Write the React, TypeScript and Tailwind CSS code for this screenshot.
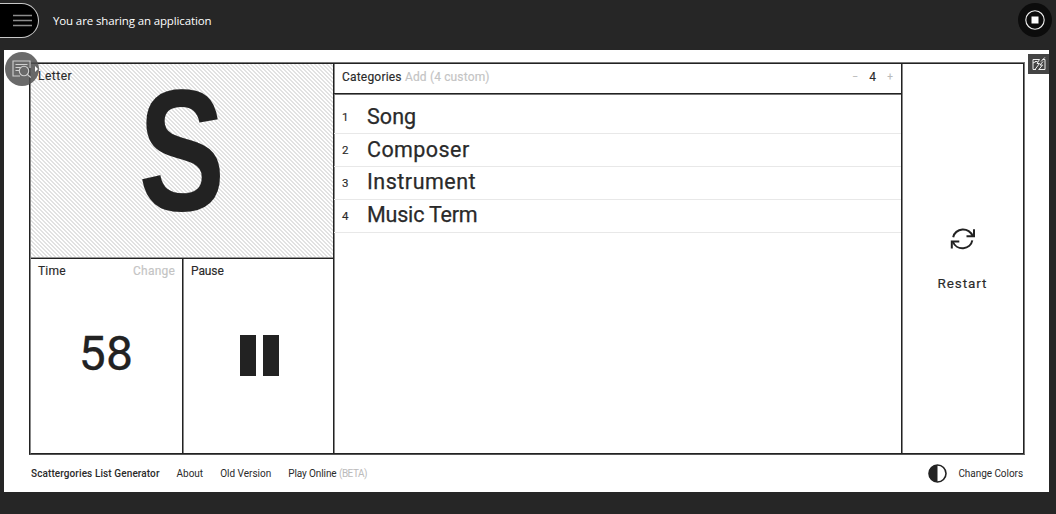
import React from "react";

const CATEGORIES = [
  { name: "Song", style: "tracking-[0.05px]" },
  { name: "Composer", style: "tracking-[0.42px]" },
  { name: "Instrument", style: "tracking-[0.5px] pb-[2px]" },
  { name: "Music Term", style: "tracking-[-0.2px] pb-[2px]" },
];

function SearchPageIcon() {
  return (
    <svg width="20" height="20" viewBox="0 0 20 20" fill="none" stroke="#d0d0d0" strokeWidth="1.1">
      <path d="M8 17H1V2h17v7" />
      <path d="M3.5 5.5h12M3.5 8.5h5M3.5 11.5h3.5" />
      <circle cx="12" cy="12" r="4.7" />
      <path d="M15.3 15.3l3.5 3.2" />
    </svg>
  );
}

function RestartIcon() {
  return (
    <svg width="26" height="24" viewBox="0 0 26 24" fill="none" stroke="#222" strokeWidth="2">
      <path d="M3.2 10.2A10 9.3 0 0 1 22.6 9" />
      <path d="M24 2.2V9.3h-7.5" />
      <path d="M22.3 13.4A10 9.3 0 0 1 3 15" />
      <path d="M1.8 21.5V14.4H9.3" />
    </svg>
  );
}

export default function App() {
  return (
    <div className="relative flex h-[514px] w-[1056px] flex-col overflow-hidden bg-[#262626] font-['Roboto',sans-serif] text-[#2a2a2a]">
      <header className="flex h-[50px] items-start justify-between">
        <div className="flex items-start">
          <button className="mt-[3px] flex h-[35px] w-[39px] items-center rounded-r-full border border-l-0 border-[#c8c8c8] bg-black pl-[13px]">
            <svg width="19" height="13" viewBox="0 0 19 13" stroke="#8c8c8c" strokeWidth="1.6">
              <path d="M0 1.5h19M0 6.5h19M0 11.5h19" />
            </svg>
          </button>
          <span className="ml-[14px] mt-[12px] whitespace-nowrap font-['Open_Sans',sans-serif] text-[11.5px] font-medium leading-[18px] tracking-[-0.13px] text-white">
            You are sharing an application
          </span>
        </div>
        <button className="mr-[4px] mt-[3px] flex size-[34px] items-center justify-center rounded-full bg-[#0c0c0c]">
          <svg width="20" height="20" viewBox="0 0 20 20">
            <circle cx="10" cy="10" r="9.2" fill="none" stroke="#eee" strokeWidth="1.1" />
            <rect x="6.5" y="6.5" width="7" height="7" fill="#fff" />
          </svg>
        </button>
      </header>

      <main className="ml-[4px] flex h-[442px] w-[1045px] flex-col bg-white pl-[25px] pt-[12px]">
        <div className="h-[393px] w-[996px] border border-b-[#555] border-l-[#222] border-r-[#777] border-t-[#777]">
          <div className="flex h-full border border-b-[#222] border-l-[#888] border-r-[#222] border-t-[#222] [-webkit-text-stroke:0.15px_currentColor]">
            <div className="flex w-[302px] flex-col">
              <section className="flex h-[194px] flex-col bg-[linear-gradient(45deg,#fff_25%,#e2e2e2_25%,#e2e2e2_50%,#fff_50%,#fff_75%,#e2e2e2_75%)] bg-[length:4px_4px] px-[7px]">
                <h2 className="mt-[3px] text-[12px] leading-[18px] tracking-[0.5px]">Letter</h2>
                <div className="flex justify-center">
                  <span className="block scale-x-[0.75] font-['Liberation_Sans',sans-serif] text-[173px] font-bold leading-[131px] text-[#222]">
                    S
                  </span>
                </div>
              </section>
              <div className="flex flex-1 border-t border-[#222] shadow-[0_-1px_0_#999]">
                <section className="flex w-[151px] flex-col px-[7px]">
                  <div className="mt-[3px] flex justify-between text-[12px] leading-[18px] tracking-[0.2px]">
                    <h2>Time</h2>
                    <button className="text-[#c4c4c4]">Change</button>
                  </div>
                  <div className="mt-[40px] pr-[1px] text-center text-[48px] leading-[68px] tracking-[0.3px] text-[#222] [-webkit-text-stroke:0.3px_#222]">
                    58
                  </div>
                </section>
                <section className="flex flex-1 flex-col border-l border-[#222] pl-[8px] shadow-[inset_1px_0_0_#888]">
                  <h2 className="mt-[3px] text-[12px] leading-[18px] tracking-[-0.1px]">Pause</h2>
                  <div className="mt-[55px] flex justify-center gap-[7.5px] pr-[5.5px]">
                    <span className="h-[41px] w-[15.5px] bg-[#222]" />
                    <span className="h-[41px] w-[15.5px] bg-[#222]" />
                  </div>
                </section>
              </div>
            </div>

            <section className="flex w-[568px] flex-col border-l border-[#222] shadow-[inset_1px_0_0_#888]">
              <div className="flex h-[30px] items-center justify-between border-b border-[#222] pb-[4px] pl-[8px] pr-[8px] text-[12px] tracking-[0.2px] shadow-[0_1px_0_#777]">
                <h2>
                  Categories <span className="tracking-[0.15px] text-[#c4c4c4]">Add (4 custom)</span>
                </h2>
                <div className="flex items-center gap-[11px]">
                  <button className="text-[10px] text-[#bbb]">−</button>
                  <span>4</span>
                  <button className="text-[10px] text-[#bbb]">+</button>
                </div>
              </div>
              <ol className="pt-[7px]">
                {CATEGORIES.map(({ name, style }, i) => (
                  <li key={name} className="flex h-[33px] items-center border-b border-[#e8e8e8] pl-[8px]">
                    <span className="w-[25px] pt-[2px] text-[11.5px]">{i + 1}</span>
                    <span className={`text-[21.5px] leading-[30px] [-webkit-text-stroke:0.25px_currentColor] ${style}`}>
                      {name}
                    </span>
                  </li>
                ))}
              </ol>
            </section>

            <button className="flex flex-1 flex-col items-center border-l border-[#222] pt-[163px] shadow-[inset_1px_0_0_#888]">
              <RestartIcon />
              <span className="mt-[22px] text-[13.5px] leading-[20px] tracking-[0.9px]">Restart</span>
            </button>
          </div>
        </div>

        <footer className="flex h-[37px] items-center justify-between pl-[2px] pr-[26px] text-[10px] font-normal">
          <nav className="flex items-center gap-[17px] whitespace-nowrap">
            <span className="font-medium tracking-[0.1px]">Scattergories List Generator</span>
            <span>About</span>
            <span>Old Version</span>
            <span className="tracking-[-0.1px]">
              Play Online <span className="tracking-[-0.5px] text-[#bbb]">(BETA)</span>
            </span>
          </nav>
          <button className="flex items-center gap-[11px] whitespace-nowrap tracking-[-0.05px]">
            <svg width="19" height="19" viewBox="0 0 19 19">
              <circle cx="9.5" cy="9.5" r="8.5" fill="#fff" stroke="#222" strokeWidth="1.6" />
              <path d="M9.5 1a8.5 8.5 0 0 0 0 17z" fill="#222" />
            </svg>
            Change Colors
          </button>
        </footer>
      </main>

      <div className="absolute left-[5px] top-[52px] flex size-[34px] items-center justify-center rounded-full bg-[#505050]/85">
        <SearchPageIcon />
        <svg className="absolute left-[30px] top-[14px]" width="3" height="6" viewBox="0 0 3 6">
          <path d="M0 0l3 3-3 3z" fill="#fff" />
        </svg>
      </div>
      <div className="absolute left-[1028px] top-[54px] flex h-[20px] w-[21px] items-center justify-center bg-[#444]">
        <svg width="14" height="14" viewBox="0 0 14 14" fill="none" stroke="#eee" strokeWidth="1">
          <path d="M7.5 2.5H1v10h3M10.5 2.5h2.5v10H7M12.8.5L9 4.5M7.5 2.5L5 6.5h2.5L3 12.5M3 4.5h2.5M11 4.5L8 8h2.5L6.5 13M1 6l3-1.5" />
        </svg>
      </div>
    </div>
  );
}
